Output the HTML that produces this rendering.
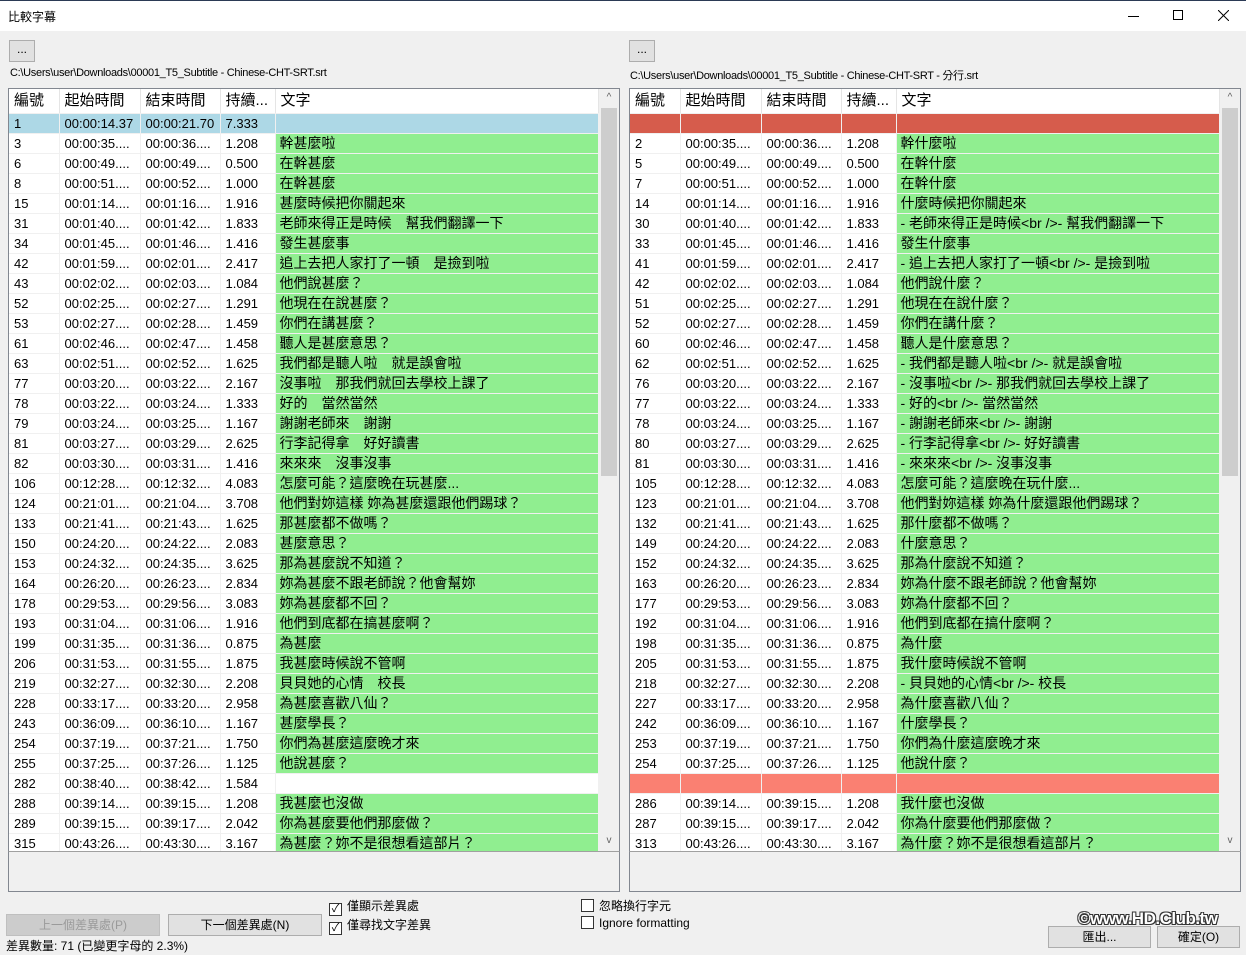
<!DOCTYPE html>
<html><head><meta charset="utf-8"><style>
*{box-sizing:border-box;margin:0;padding:0}
body{width:1246px;height:955px;background:#f0f0f0;font-family:"Liberation Sans","Noto Sans CJK TC",sans-serif;position:relative;overflow:hidden;color:#000}
.title{position:absolute;left:0;top:0;width:1246px;height:31px;background:#fff;border-top:1px solid #2b3a55}
.title span{position:absolute;left:8px;top:7px;font-size:12px}
.btn3{position:absolute;width:26px;height:22px;border:1px solid #adadad;background:#e1e1e1;font-size:12px;text-align:center;line-height:16px}
.path{position:absolute;top:67px;font-size:11px;letter-spacing:-0.3px}
.list{position:absolute;top:88px;width:612px;height:764px;background:#fff;border:1px solid #828790;overflow:hidden}
table{border-collapse:collapse;table-layout:fixed;position:absolute;left:0;top:0}
td{height:20px;border-right:1px solid #f0f0f0;border-bottom:1px solid #f0f0f0;font-size:13px;padding-left:5px;white-space:nowrap;overflow:hidden;line-height:19px}
td.t{font-size:14px;background:#90ee90;padding-left:4px}
tr.h td{height:24px;font-size:15px;background:#fff;line-height:23px;border-right:1px solid #e5e5e5}
tr.b td{background:#add8e6}
tr.r td{background:#d65c4c}
tr.s td{background:#fa8072}
tr.w td.t{background:#fff}
.sb{position:absolute;top:0;right:0;width:20px;height:762px;background:#f0f0f0}
.thumb{position:absolute;left:2px;top:19px;width:16px;height:368px;background:#cdcdcd}
.ar{position:absolute;left:0;width:20px;text-align:center;font-size:10px;color:#606060}
.box{position:absolute;top:851px;width:612px;height:41px;border:1px solid #828790;border-top-color:#a0a0a0;background:#f0f0f0}
.cb{position:absolute;font-size:12px}
.cb i{display:inline-block;width:13px;height:13px;border:1px solid #333;background:#fff;vertical-align:-2px;margin-right:5px;font-style:normal;font-size:11px;line-height:11px;text-align:center}
.bt{position:absolute;height:22px;border:1px solid #adadad;background:#e1e1e1;font-size:12px;text-align:center;line-height:20px}
</style></head><body>
<div class="title"><span>比較字幕</span>
<div style="position:absolute;left:1128px;top:15px;width:11px;height:1px;background:#000"></div>
<div style="position:absolute;left:1173px;top:9px;width:10px;height:10px;border:1px solid #000"></div>
<svg style="position:absolute;left:1218px;top:9px" width="11" height="11"><path d="M0 0L11 11M11 0L0 11" stroke="#000" stroke-width="1"/></svg>
</div>
<div class="btn3" style="left:9px;top:40px">...</div>
<div class="btn3" style="left:629px;top:40px">...</div>
<div class="path" style="left:10px">C:\Users\user\Downloads\00001_T5_Subtitle - Chinese-CHT-SRT.srt</div>
<div class="path" style="left:630px">C:\Users\user\Downloads\00001_T5_Subtitle - Chinese-CHT-SRT - 分行.srt</div>

<div class="list" style="left:8px">
<table style="width:589px">
<colgroup><col style="width:50px"><col style="width:81px"><col style="width:80px"><col style="width:55px"><col style="width:323px"></colgroup>
<tr class="h"><td>編號</td><td>起始時間</td><td>結束時間</td><td>持續...</td><td>文字</td></tr>
<tr class="b"><td>1</td><td>00:00:14.37</td><td>00:00:21.70</td><td>7.333</td><td></td></tr>
<tr><td>3</td><td>00:00:35....</td><td>00:00:36....</td><td>1.208</td><td class="t">幹甚麼啦</td></tr>
<tr><td>6</td><td>00:00:49....</td><td>00:00:49....</td><td>0.500</td><td class="t">在幹甚麼</td></tr>
<tr><td>8</td><td>00:00:51....</td><td>00:00:52....</td><td>1.000</td><td class="t">在幹甚麼</td></tr>
<tr><td>15</td><td>00:01:14....</td><td>00:01:16....</td><td>1.916</td><td class="t">甚麼時候把你關起來</td></tr>
<tr><td>31</td><td>00:01:40....</td><td>00:01:42....</td><td>1.833</td><td class="t">老師來得正是時候　幫我們翻譯一下</td></tr>
<tr><td>34</td><td>00:01:45....</td><td>00:01:46....</td><td>1.416</td><td class="t">發生甚麼事</td></tr>
<tr><td>42</td><td>00:01:59....</td><td>00:02:01....</td><td>2.417</td><td class="t">追上去把人家打了一頓　是撿到啦</td></tr>
<tr><td>43</td><td>00:02:02....</td><td>00:02:03....</td><td>1.084</td><td class="t">他們說甚麼？</td></tr>
<tr><td>52</td><td>00:02:25....</td><td>00:02:27....</td><td>1.291</td><td class="t">他現在在說甚麼？</td></tr>
<tr><td>53</td><td>00:02:27....</td><td>00:02:28....</td><td>1.459</td><td class="t">你們在講甚麼？</td></tr>
<tr><td>61</td><td>00:02:46....</td><td>00:02:47....</td><td>1.458</td><td class="t">聽人是甚麼意思？</td></tr>
<tr><td>63</td><td>00:02:51....</td><td>00:02:52....</td><td>1.625</td><td class="t">我們都是聽人啦　就是誤會啦</td></tr>
<tr><td>77</td><td>00:03:20....</td><td>00:03:22....</td><td>2.167</td><td class="t">沒事啦　那我們就回去學校上課了</td></tr>
<tr><td>78</td><td>00:03:22....</td><td>00:03:24....</td><td>1.333</td><td class="t">好的　當然當然</td></tr>
<tr><td>79</td><td>00:03:24....</td><td>00:03:25....</td><td>1.167</td><td class="t">謝謝老師來　謝謝</td></tr>
<tr><td>81</td><td>00:03:27....</td><td>00:03:29....</td><td>2.625</td><td class="t">行李記得拿　好好讀書</td></tr>
<tr><td>82</td><td>00:03:30....</td><td>00:03:31....</td><td>1.416</td><td class="t">來來來　沒事沒事</td></tr>
<tr><td>106</td><td>00:12:28....</td><td>00:12:32....</td><td>4.083</td><td class="t">怎麼可能？這麼晚在玩甚麼...</td></tr>
<tr><td>124</td><td>00:21:01....</td><td>00:21:04....</td><td>3.708</td><td class="t">他們對妳這樣 妳為甚麼還跟他們踢球？</td></tr>
<tr><td>133</td><td>00:21:41....</td><td>00:21:43....</td><td>1.625</td><td class="t">那甚麼都不做嗎？</td></tr>
<tr><td>150</td><td>00:24:20....</td><td>00:24:22....</td><td>2.083</td><td class="t">甚麼意思？</td></tr>
<tr><td>153</td><td>00:24:32....</td><td>00:24:35....</td><td>3.625</td><td class="t">那為甚麼說不知道？</td></tr>
<tr><td>164</td><td>00:26:20....</td><td>00:26:23....</td><td>2.834</td><td class="t">妳為甚麼不跟老師說？他會幫妳</td></tr>
<tr><td>178</td><td>00:29:53....</td><td>00:29:56....</td><td>3.083</td><td class="t">妳為甚麼都不回？</td></tr>
<tr><td>193</td><td>00:31:04....</td><td>00:31:06....</td><td>1.916</td><td class="t">他們到底都在搞甚麼啊？</td></tr>
<tr><td>199</td><td>00:31:35....</td><td>00:31:36....</td><td>0.875</td><td class="t">為甚麼</td></tr>
<tr><td>206</td><td>00:31:53....</td><td>00:31:55....</td><td>1.875</td><td class="t">我甚麼時候說不管啊</td></tr>
<tr><td>219</td><td>00:32:27....</td><td>00:32:30....</td><td>2.208</td><td class="t">貝貝她的心情　校長</td></tr>
<tr><td>228</td><td>00:33:17....</td><td>00:33:20....</td><td>2.958</td><td class="t">為甚麼喜歡八仙？</td></tr>
<tr><td>243</td><td>00:36:09....</td><td>00:36:10....</td><td>1.167</td><td class="t">甚麼學長？</td></tr>
<tr><td>254</td><td>00:37:19....</td><td>00:37:21....</td><td>1.750</td><td class="t">你們為甚麼這麼晚才來</td></tr>
<tr><td>255</td><td>00:37:25....</td><td>00:37:26....</td><td>1.125</td><td class="t">他說甚麼？</td></tr>
<tr class="w"><td>282</td><td>00:38:40....</td><td>00:38:42....</td><td>1.584</td><td class="t"></td></tr>
<tr><td>288</td><td>00:39:14....</td><td>00:39:15....</td><td>1.208</td><td class="t">我甚麼也沒做</td></tr>
<tr><td>289</td><td>00:39:15....</td><td>00:39:17....</td><td>2.042</td><td class="t">你為甚麼要他們那麼做？</td></tr>
<tr><td>315</td><td>00:43:26....</td><td>00:43:30....</td><td>3.167</td><td class="t">為甚麼？妳不是很想看這部片？</td></tr>
</table>
<div class="sb"><div class="ar" style="top:3px">^</div><div class="thumb"></div><div class="ar" style="top:746px">v</div></div>
</div>

<div class="list" style="left:629px">
<table style="width:589px">
<colgroup><col style="width:50px"><col style="width:81px"><col style="width:80px"><col style="width:55px"><col style="width:323px"></colgroup>
<tr class="h"><td>編號</td><td>起始時間</td><td>結束時間</td><td>持續...</td><td>文字</td></tr>
<tr class="r"><td></td><td></td><td></td><td></td><td></td></tr>
<tr><td>2</td><td>00:00:35....</td><td>00:00:36....</td><td>1.208</td><td class="t">幹什麼啦</td></tr>
<tr><td>5</td><td>00:00:49....</td><td>00:00:49....</td><td>0.500</td><td class="t">在幹什麼</td></tr>
<tr><td>7</td><td>00:00:51....</td><td>00:00:52....</td><td>1.000</td><td class="t">在幹什麼</td></tr>
<tr><td>14</td><td>00:01:14....</td><td>00:01:16....</td><td>1.916</td><td class="t">什麼時候把你關起來</td></tr>
<tr><td>30</td><td>00:01:40....</td><td>00:01:42....</td><td>1.833</td><td class="t">- 老師來得正是時候&lt;br /&gt;- 幫我們翻譯一下</td></tr>
<tr><td>33</td><td>00:01:45....</td><td>00:01:46....</td><td>1.416</td><td class="t">發生什麼事</td></tr>
<tr><td>41</td><td>00:01:59....</td><td>00:02:01....</td><td>2.417</td><td class="t">- 追上去把人家打了一頓&lt;br /&gt;- 是撿到啦</td></tr>
<tr><td>42</td><td>00:02:02....</td><td>00:02:03....</td><td>1.084</td><td class="t">他們說什麼？</td></tr>
<tr><td>51</td><td>00:02:25....</td><td>00:02:27....</td><td>1.291</td><td class="t">他現在在說什麼？</td></tr>
<tr><td>52</td><td>00:02:27....</td><td>00:02:28....</td><td>1.459</td><td class="t">你們在講什麼？</td></tr>
<tr><td>60</td><td>00:02:46....</td><td>00:02:47....</td><td>1.458</td><td class="t">聽人是什麼意思？</td></tr>
<tr><td>62</td><td>00:02:51....</td><td>00:02:52....</td><td>1.625</td><td class="t">- 我們都是聽人啦&lt;br /&gt;- 就是誤會啦</td></tr>
<tr><td>76</td><td>00:03:20....</td><td>00:03:22....</td><td>2.167</td><td class="t">- 沒事啦&lt;br /&gt;- 那我們就回去學校上課了</td></tr>
<tr><td>77</td><td>00:03:22....</td><td>00:03:24....</td><td>1.333</td><td class="t">- 好的&lt;br /&gt;- 當然當然</td></tr>
<tr><td>78</td><td>00:03:24....</td><td>00:03:25....</td><td>1.167</td><td class="t">- 謝謝老師來&lt;br /&gt;- 謝謝</td></tr>
<tr><td>80</td><td>00:03:27....</td><td>00:03:29....</td><td>2.625</td><td class="t">- 行李記得拿&lt;br /&gt;- 好好讀書</td></tr>
<tr><td>81</td><td>00:03:30....</td><td>00:03:31....</td><td>1.416</td><td class="t">- 來來來&lt;br /&gt;- 沒事沒事</td></tr>
<tr><td>105</td><td>00:12:28....</td><td>00:12:32....</td><td>4.083</td><td class="t">怎麼可能？這麼晚在玩什麼...</td></tr>
<tr><td>123</td><td>00:21:01....</td><td>00:21:04....</td><td>3.708</td><td class="t">他們對妳這樣 妳為什麼還跟他們踢球？</td></tr>
<tr><td>132</td><td>00:21:41....</td><td>00:21:43....</td><td>1.625</td><td class="t">那什麼都不做嗎？</td></tr>
<tr><td>149</td><td>00:24:20....</td><td>00:24:22....</td><td>2.083</td><td class="t">什麼意思？</td></tr>
<tr><td>152</td><td>00:24:32....</td><td>00:24:35....</td><td>3.625</td><td class="t">那為什麼說不知道？</td></tr>
<tr><td>163</td><td>00:26:20....</td><td>00:26:23....</td><td>2.834</td><td class="t">妳為什麼不跟老師說？他會幫妳</td></tr>
<tr><td>177</td><td>00:29:53....</td><td>00:29:56....</td><td>3.083</td><td class="t">妳為什麼都不回？</td></tr>
<tr><td>192</td><td>00:31:04....</td><td>00:31:06....</td><td>1.916</td><td class="t">他們到底都在搞什麼啊？</td></tr>
<tr><td>198</td><td>00:31:35....</td><td>00:31:36....</td><td>0.875</td><td class="t">為什麼</td></tr>
<tr><td>205</td><td>00:31:53....</td><td>00:31:55....</td><td>1.875</td><td class="t">我什麼時候說不管啊</td></tr>
<tr><td>218</td><td>00:32:27....</td><td>00:32:30....</td><td>2.208</td><td class="t">- 貝貝她的心情&lt;br /&gt;- 校長</td></tr>
<tr><td>227</td><td>00:33:17....</td><td>00:33:20....</td><td>2.958</td><td class="t">為什麼喜歡八仙？</td></tr>
<tr><td>242</td><td>00:36:09....</td><td>00:36:10....</td><td>1.167</td><td class="t">什麼學長？</td></tr>
<tr><td>253</td><td>00:37:19....</td><td>00:37:21....</td><td>1.750</td><td class="t">你們為什麼這麼晚才來</td></tr>
<tr><td>254</td><td>00:37:25....</td><td>00:37:26....</td><td>1.125</td><td class="t">他說什麼？</td></tr>
<tr class="s"><td></td><td></td><td></td><td></td><td></td></tr>
<tr><td>286</td><td>00:39:14....</td><td>00:39:15....</td><td>1.208</td><td class="t">我什麼也沒做</td></tr>
<tr><td>287</td><td>00:39:15....</td><td>00:39:17....</td><td>2.042</td><td class="t">你為什麼要他們那麼做？</td></tr>
<tr><td>313</td><td>00:43:26....</td><td>00:43:30....</td><td>3.167</td><td class="t">為什麼？妳不是很想看這部片？</td></tr>
</table>
<div class="sb"><div class="ar" style="top:3px">^</div><div class="thumb"></div><div class="ar" style="top:746px">v</div></div>
</div>

<div class="box" style="left:8px"></div>
<div class="box" style="left:629px"></div>

<div class="cb" style="left:329px;top:897px"><i>✓</i>僅顯示差異處</div>
<div class="cb" style="left:329px;top:916px"><i>✓</i>僅尋找文字差異</div>
<div class="cb" style="left:581px;top:897px"><i></i>忽略換行字元</div>
<div class="cb" style="left:581px;top:916px"><i></i>Ignore formatting</div>

<div class="bt" style="left:6px;top:914px;width:154px;background:#cccccc;border-color:#bfbfbf;color:#9a9a9a">上一個差異處(P)</div>
<div class="bt" style="left:168px;top:914px;width:154px">下一個差異處(N)</div>
<div style="position:absolute;left:6px;top:937px;font-size:12px">差異數量: 71 (已變更字母的 2.3%)</div>

<div class="bt" style="left:1048px;top:926px;width:103px">匯出...</div>
<div class="bt" style="left:1157px;top:926px;width:83px">確定(O)</div>
<div style="position:absolute;left:1078px;top:909px;font-size:17px;font-weight:bold;color:#fff;letter-spacing:-0.5px;text-shadow:-1px -1px 0 #333,1px -1px 0 #333,-1px 1px 0 #333,1px 1px 0 #333">©www.HD.Club.tw</div>
</body></html>
